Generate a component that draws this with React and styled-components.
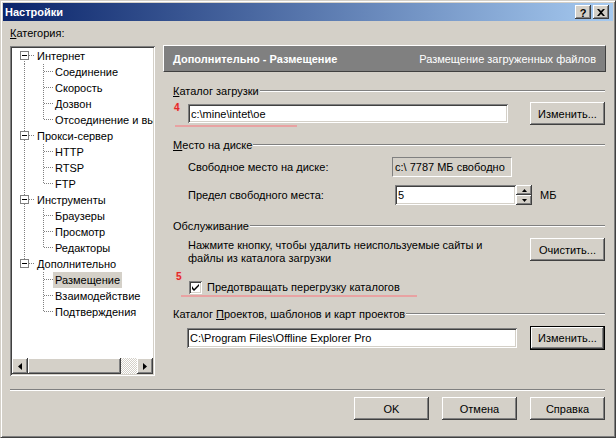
import React from 'react';
import styled, { createGlobalStyle, css } from 'styled-components';

const GlobalStyle = createGlobalStyle`
  html, body { margin: 0; padding: 0; background: #d4d0c8; }
  body { font-family: "Liberation Sans", Arial, sans-serif; font-size: 11px; color: #000; }
  * { box-sizing: border-box; }
`;

const raised = css`
  background: #d4d0c8;
  box-shadow: inset -1px -1px #404040, inset 1px 1px #fff, inset -2px -2px #808080, inset 2px 2px #d4d0c8;
`;
const sunken = css`
  box-shadow: inset 1px 1px #808080, inset -1px -1px #fff, inset 2px 2px #404040, inset -2px -2px #d4d0c8;
`;

const Window = styled.div`
  width: 616px;
  height: 438px;
  border: 1px solid;
  border-color: #d4d0c8 #404040 #404040 #d4d0c8;
  box-shadow: inset 1px 1px #fff, inset -1px -1px #808080;
  padding: 2px;
  background: #d4d0c8;
  display: flex;
  flex-direction: column;
  overflow: hidden;
`;

const TitleBar = styled.div`
  height: 18px;
  flex: none;
  display: flex;
  align-items: center;
  padding: 0 4px 0 2px;
  background: linear-gradient(to right, #0a246a, #a6caf0);
`;

const TitleText = styled.span`
  color: #fff;
  font-weight: bold;
  font-size: 11px;
  flex: 1;
`;

const CaptionButton = styled.div`
  ${raised};
  width: 16px;
  height: 14px;
  display: flex;
  align-items: center;
  justify-content: center;
  margin-left: ${p => p.$gap}px;
  font-weight: bold;
  font-size: 11px;
  line-height: 14px;
  padding-top: 1px;
`;

const Body = styled.div`
  display: grid;
  grid-template-columns: 145px 443px;
  grid-template-rows: 20px auto;
  column-gap: 8px;
  padding: 5px 0 0 7px;
`;

const CategoryLabel = styled.div`
  grid-column: 1;
  line-height: 14px;
`;

const TreeBox = styled.div`
  grid-column: 1;
  grid-row: 2;
  width: 145px;
  height: 330px;
  background: #fff;
  ${sunken};
  padding: 2px;
  display: flex;
  flex-direction: column;
`;

const TreeList = styled.div`
  flex: 1;
  overflow: hidden;
`;

const TreeRow = styled.div`
  height: 16px;
  display: flex;
  align-items: center;
  white-space: nowrap;
`;

const Gutter = styled.svg`
  flex: none;
  display: block;
`;

const NodeLabel = styled.span`
  padding: 0 2px;
  line-height: 16px;
  height: 16px;
  background: ${p => (p.$selected ? '#d4d0c8' : 'transparent')};
`;

const HScroll = styled.div`
  height: 16px;
  flex: none;
  display: flex;
`;

const ScrollButton = styled.div`
  ${raised};
  width: 16px;
  height: 16px;
  flex: none;
  display: flex;
  align-items: center;
  justify-content: center;
`;

const ScrollThumb = styled.div`
  ${raised};
  width: 93px;
  height: 16px;
  flex: none;
`;

const ScrollTrack = styled.div`
  flex: 1;
  background: repeating-conic-gradient(#fff 0 25%, #d4d0c8 0 50%) 0 0 / 2px 2px;
`;

const Panel = styled.div`
  grid-column: 2;
  grid-row: 2;
  display: flex;
  flex-direction: column;
  padding-right: 1px;
`;

const Header = styled.div`
  height: 27px;
  margin: -1px -1px 0 0;
  background: #808080;
  border: 1px solid;
  border-color: #fff #404040 #404040 #fff;
  display: flex;
  align-items: center;
  justify-content: space-between;
  padding: 0 9px;
  color: #fff;
`;

const HeaderTitle = styled.span`
  font-weight: bold;
`;

const Section = styled.div`
  padding-left: 10px;
  display: flex;
  flex-direction: column;
`;

const GroupTitle = styled.div`
  display: flex;
  align-items: center;
  line-height: 14px;
  height: 14px;
  margin-top: ${p => p.$mt}px;
`;

const EtchedLine = styled.div`
  flex: 1;
  height: 2px;
  border-top: 1px solid #808080;
  border-bottom: 1px solid #fff;
  margin-left: 1px;
`;

const Row = styled.div`
  display: flex;
  align-items: ${p => p.$align || 'center'};
  margin-top: ${p => p.$mt || 0}px;
  min-height: ${p => p.$h || 0}px;
`;

const Marker = styled.span`
  width: ${p => p.$w}px;
  padding-left: ${p => p.$pad}px;
  flex: none;
  align-self: flex-start;
  margin-top: ${p => p.$mt || 0}px;
  color: #e02828;
  font-weight: bold;
  font-size: 10px;
  line-height: 11px;
  text-shadow: 0 0 2px #f4b0b0, 0 0 1px #f4b0b0;
`;

const TextField = styled.div`
  width: ${p => p.$w}px;
  height: ${p => p.$h || 20}px;
  margin-left: ${p => p.$ml || 0}px;
  flex: none;
  background: #fff;
  ${sunken};
  padding: 0 3px;
  display: flex;
  align-items: center;
  white-space: nowrap;
  overflow: hidden;
`;

const StaticField = styled.div`
  width: ${p => p.$w}px;
  height: 20px;
  flex: none;
  border: 1px solid;
  border-color: #808080 #fff #fff #808080;
  padding: 0 2px;
  display: flex;
  align-items: center;
  white-space: nowrap;
`;

const Button = styled.div`
  ${raised};
  width: 75px;
  height: ${p => (p.$default ? 24 : 23)}px;
  flex: none;
  margin-left: ${p => (p.$auto ? 'auto' : '0')};
  display: flex;
  align-items: center;
  justify-content: center;
  ${p =>
    p.$default &&
    css`
      border: 1px solid #000;
    `}
`;

const FieldLabel = styled.span`
  width: ${p => p.$w}px;
  padding-left: 15px;
  flex: none;
`;

const Spinner = styled.div`
  width: 16px;
  height: 20px;
  flex: none;
  display: flex;
  flex-direction: column;
`;

const SpinButton = styled.div`
  ${raised};
  height: 10px;
  display: flex;
  align-items: center;
  justify-content: center;
`;

const Unit = styled.span`
  margin-left: 8px;
`;

const Paragraph = styled.div`
  padding: 1px 0 0 15px;
  line-height: 13px;
`;

const CheckBox = styled.div`
  width: 13px;
  height: 13px;
  flex: none;
  background: #fff;
  ${sunken};
  display: flex;
  align-items: center;
  justify-content: center;
`;

const CheckLabel = styled.span`
  margin-left: 5px;
`;

const Annotation = styled.div`
  height: 2px;
  width: ${p => p.$w}px;
  margin-left: ${p => p.$ml}px;
  margin-top: ${p => p.$mt || 0}px;
  background: #e8a2a2;
`;

const Separator = styled.div`
  margin: 13px 8px 0 7px;
  height: 2px;
  border-top: 1px solid #808080;
  border-bottom: 1px solid #fff;
`;

const Footer = styled.div`
  display: flex;
  justify-content: flex-end;
  gap: 13px;
  padding-right: 8px;
  margin-top: 6px;
`;

const tree = [
  { label: 'Интернет', children: ['Соединение', 'Скорость', 'Дозвон', 'Отсоединение и выход'] },
  { label: 'Прокси-сервер', children: ['HTTP', 'RTSP', 'FTP'] },
  { label: 'Инструменты', children: ['Браузеры', 'Просмотр', 'Редакторы'] },
  { label: 'Дополнительно', children: ['Размещение', 'Взаимодействие', 'Подтверждения'] },
];

const dot = { stroke: '#808080', strokeWidth: 1, strokeDasharray: '1 1' };

function RootGutter({ first, last }) {
  return (
    <Gutter width="23" height="16" viewBox="0 0 23 16">
      <line x1="12.5" y1={first ? 7 : 0} x2="12.5" y2={last ? 8 : 16} {...dot} />
      <line x1="17" y1="7.5" x2="23" y2="7.5" {...dot} />
      <rect x="8.5" y="3.5" width="8" height="8" fill="#fff" stroke="#808080" />
      <line x1="10" y1="7.5" x2="15" y2="7.5" stroke="#000" />
    </Gutter>
  );
}

function ChildGutter({ parentLast, lastChild }) {
  return (
    <Gutter width="41" height="16" viewBox="0 0 41 16">
      {!parentLast && <line x1="12.5" y1="0" x2="12.5" y2="16" {...dot} />}
      <line x1="31.5" y1="0" x2="31.5" y2={lastChild ? 8 : 16} {...dot} />
      <line x1="32" y1="7.5" x2="41" y2="7.5" {...dot} />
    </Gutter>
  );
}

function Tree() {
  return (
    <TreeBox>
      <TreeList>
        {tree.map((node, i) => {
          const last = i === tree.length - 1;
          return (
            <React.Fragment key={node.label}>
              <TreeRow>
                <RootGutter first={i === 0} last={last} />
                <NodeLabel>{node.label}</NodeLabel>
              </TreeRow>
              {node.children.map((c, j) => (
                <TreeRow key={c}>
                  <ChildGutter parentLast={last} lastChild={j === node.children.length - 1} />
                  <NodeLabel $selected={c === 'Размещение'}>{c}</NodeLabel>
                </TreeRow>
              ))}
            </React.Fragment>
          );
        })}
      </TreeList>
      <HScroll>
        <ScrollButton>
          <svg width="4" height="7" viewBox="0 0 4 7">
            <path d="M4 0 L0 3.5 L4 7 Z" fill="#000" />
          </svg>
        </ScrollButton>
        <ScrollThumb />
        <ScrollTrack />
        <ScrollButton>
          <svg width="4" height="7" viewBox="0 0 4 7">
            <path d="M0 0 L4 3.5 L0 7 Z" fill="#000" />
          </svg>
        </ScrollButton>
      </HScroll>
    </TreeBox>
  );
}

export default function App() {
  return (
    <>
      <GlobalStyle />
      <Window>
        <TitleBar>
          <TitleText>Настройки</TitleText>
          <CaptionButton $gap={0}>?</CaptionButton>
          <CaptionButton $gap={2}>
            <svg width="8" height="7" viewBox="0 0 8 7">
              <path d="M0 0 L2 0 L4 2 L6 0 L8 0 L5 3.5 L8 7 L6 7 L4 5 L2 7 L0 7 L3 3.5 Z" fill="#000" />
            </svg>
          </CaptionButton>
        </TitleBar>
        <Body>
          <CategoryLabel>
            <u>К</u>атегория:
          </CategoryLabel>
          <Tree />
          <Panel>
            <Header>
              <HeaderTitle>Дополнительно - Размещение</HeaderTitle>
              <span>Размещение загруженных файлов</span>
            </Header>
            <Section>
              <GroupTitle $mt={12}>
                <span>
                  <u>К</u>аталог загрузки
                </span>
                <EtchedLine />
              </GroupTitle>
              <Row $mt={4} $h={23}>
                <Marker $w={15} $pad={1} $mt={0}>4</Marker>
                <TextField $w={320} $h={19}>{'c:\\mine\\intet\\oe'}</TextField>
                <Button $auto>Изменить...</Button>
              </Row>
              <Annotation $w={122} $ml={2} $mt={0} />

              <GroupTitle $mt={11}>
                <span>
                  <u>М</u>есто на диске
                </span>
                <EtchedLine />
              </GroupTitle>
              <Row $mt={5}>
                <FieldLabel $w={219}>Свободное место на диске:</FieldLabel>
                <StaticField $w={120}>{'c:\\ 7787 МБ свободно'}</StaticField>
              </Row>
              <Row $mt={8}>
                <FieldLabel $w={222}>Предел свободного места:</FieldLabel>
                <TextField $w={121}>5</TextField>
                <Spinner>
                  <SpinButton>
                    <svg width="5" height="3" viewBox="0 0 5 3">
                      <path d="M2.5 0 L5 3 L0 3 Z" fill="#000" />
                    </svg>
                  </SpinButton>
                  <SpinButton>
                    <svg width="5" height="3" viewBox="0 0 5 3">
                      <path d="M0 0 L5 0 L2.5 3 Z" fill="#000" />
                    </svg>
                  </SpinButton>
                </Spinner>
                <Unit>МБ</Unit>
              </Row>

              <GroupTitle $mt={14}>
                <span>Обслуживание</span>
                <EtchedLine />
              </GroupTitle>
              <Row $mt={5} $align="flex-start">
                <Paragraph>
                  Нажмите кнопку, чтобы удалить неиспользуемые сайты и
                  <br />
                  файлы из каталога загрузки
                </Paragraph>
                <Button $auto>Очистить...</Button>
              </Row>
              <Row $mt={14} $h={16}>
                <Marker $w={16} $pad={3} $mt={-8}>5</Marker>
                <CheckBox>
                  <svg width="7" height="7" viewBox="0 0 7 7">
                    <path d="M0 2 L0 5 L2 7 L7 2 L7 0 L2 5 Z" fill="#000" />
                  </svg>
                </CheckBox>
                <CheckLabel>Предотвращать перегрузку каталогов</CheckLabel>
              </Row>
              <Annotation $w={236} $ml={8} />

              <GroupTitle $mt={10}>
                <span>
                  Каталог <u>П</u>роектов, шаблонов и карт проектов
                </span>
                <EtchedLine />
              </GroupTitle>
              <Row $mt={5}>
                <TextField $w={330} $ml={14}>{'C:\\Program Files\\Offline Explorer Pro'}</TextField>
                <Button $auto $default>Изменить...</Button>
              </Row>
            </Section>
          </Panel>
        </Body>
        <Separator />
        <Footer>
          <Button>OK</Button>
          <Button>Отмена</Button>
          <Button>Справка</Button>
        </Footer>
      </Window>
    </>
  );
}
